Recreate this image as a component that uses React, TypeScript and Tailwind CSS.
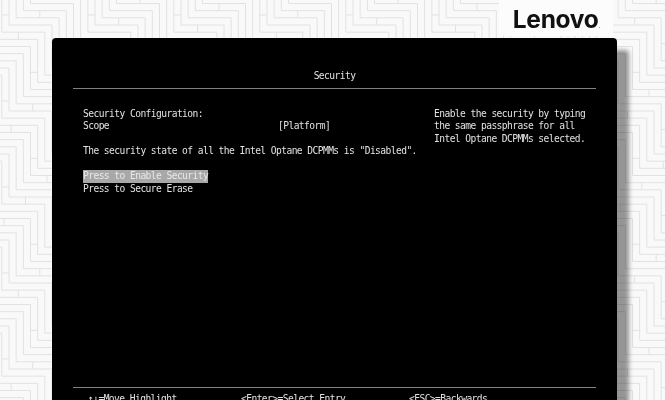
import React from "react";

const P = 86;
const S = P / 2;
const D = P / 12;

function Background() {
  const lines: string[] = [];
  const ticks: string[] = [];
  for (let k = -40; k < 60; k++) {
    const pts: string[] = [];
    for (let j = -14; j < 14; j++) {
      const x = 9 + S * j + D * k;
      const y = 111 + S * j - D * k;
      pts.push(`${x},${y}`, `${x + S},${y}`);
      if ((((j + k) % 3) + 3) % 3 === 0) {
        ticks.push(`M${x + S * 0.55} ${y - D}V${y}`);
      }
      if ((((j * 2 + k) % 4) + 4) % 4 === 1) {
        ticks.push(`M${x + S} ${y + S * 0.6}H${x + S + D}`);
      }
    }
    lines.push(pts.join(" "));
  }
  return (
    <svg className="absolute inset-0 blur-[0.4px]" width={665} height={400} viewBox="0 0 665 400" fill="none" stroke="#e2e2e2" strokeWidth={1}>
      {lines.map((p, i) => (
        <polyline key={i} points={p} />
      ))}
      <path d={ticks.join("")} />
    </svg>
  );
}

const mono = "font-['DejaVu_Sans_Mono','Liberation_Mono',monospace]";

export default function App() {
  return (
    <div className="relative w-[665px] h-[400px] overflow-hidden bg-[#f9f9f9]">
      <Background />
      <div className="relative flex flex-col">
        <header className="h-[38px] flex justify-end pr-[52px]">
          <div className="h-[36px] flex items-start bg-[#fcfcfc] pl-[14px] pr-[13px] pt-[4px]">
            <span className="font-['Inter','Liberation_Sans',sans-serif] font-bold text-[24.5px] leading-[30px] tracking-[-0.3px] text-[#111111] blur-[0.3px]">
              Lenovo<span className="text-[5px] font-normal tracking-normal">.</span>
            </span>
          </div>
        </header>
        <main className={`ml-[52px] w-[565px] h-[380px] bg-black rounded-[4px] shadow-[12px_12px_4px_rgba(0,0,0,0.4)] px-[21px] pt-[32px] text-[9.6px] tracking-[-0.56px] leading-[12.5px] text-[#e2e2e2] ${mono} whitespace-pre blur-[0.25px]`}>
          <div className="h-[17.5px] text-center">Security</div>
          <div className="h-[1.5px] bg-[#808080]" />
          <div className="flex pl-[10px] pt-[18.5px] h-[297.5px]">
            <div className="w-[351px]">
              <div>Security Configuration:</div>
              <div className="flex">
                <span className="w-[195px]">Scope</span>
                <span>[Platform]</span>
              </div>
              <div className="h-[12.5px]" />
              <div>The security state of all the Intel Optane DCPMMs is "Disabled".</div>
              <div className="h-[12.5px]" />
              <div className="w-fit bg-[#a8a8a8] text-[#e8e8e8]">Press to Enable Security</div>
              <div>Press to Secure Erase</div>
            </div>
            <div>
              <div>Enable the security by typing</div>
              <div>the same passphrase for all</div>
              <div>Intel Optane DCPMMs selected.</div>
            </div>
          </div>
          <div className="h-[1.5px] bg-[#808080]" />
          <div className="flex pl-[15px] pt-[4.5px]">
            <span className="w-[153px]">↑↓=Move Highlight</span>
            <span className="w-[168px]">&lt;Enter&gt;=Select Entry</span>
            <span>&lt;ESC&gt;=Backwards</span>
          </div>
        </main>
      </div>
    </div>
  );
}
